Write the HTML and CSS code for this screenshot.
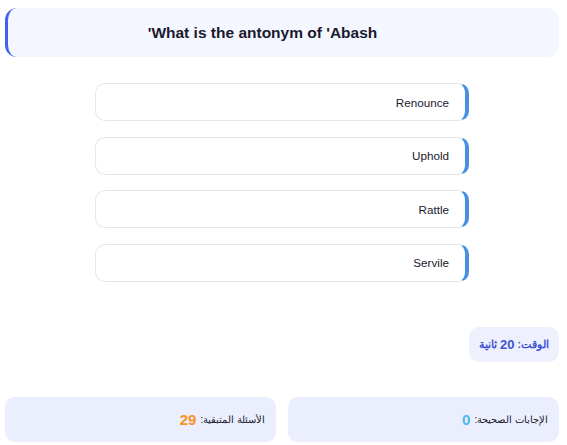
FILE: index.html
```html
<!DOCTYPE html>
<html lang="ar" dir="rtl">
<head>
<meta charset="utf-8">
<link rel="stylesheet" href="styles.css">
</head>
<body>
<div class="page">
  <div class="question"><h2 class="question-text">What is the antonym of 'Abash'</h2></div>
  <div class="options">
    <div class="option">Renounce</div>
    <div class="option">Uphold</div>
    <div class="option">Rattle</div>
    <div class="option">Servile</div>
  </div>
  <div class="timer-row"><div class="timer">الوقت: <span class="tnum">20</span> ثانية</div></div>
  <div class="stats">
    <div class="stat">الإجابات الصحيحة: <span class="num correct">0</span></div>
    <div class="stat">الأسئلة المتبقية: <span class="num remaining">29</span></div>
  </div>
</div>
</body>
</html>
```
FILE: styles.css
```css
html, body { margin: 0; padding: 0; background: #fff; }
body { font-family: "Liberation Sans", Arial, sans-serif; color: #1f1f2e; }
.page { padding: 8px 8px 0 5px; }
.question {
  box-sizing: border-box;
  height: 49px;
  background: #f4f7ff;
  border-left: 3px solid #4361ee;
  border-radius: 12px;
  display: flex;
  align-items: center;
  justify-content: center;
}
.question-text {
  margin: 0;
  font-size: 15.5px;
  font-weight: bold;
  color: #1a1a2e;
  padding-right: 42px;
}
.options {
  width: 374px;
  margin: 26px auto 0;
  display: flex;
  flex-direction: column;
  gap: 15.5px;
}
.option {
  box-sizing: border-box;
  height: 38px;
  border: 1px solid #e5e7eb;
  border-right: 4px solid #4a90e2;
  border-radius: 10px;
  background: #fff;
  display: flex;
  align-items: center;
  padding-right: 16px;
  font-size: 11.7px;
  color: #1a1a2e;
}
.timer-row { display: flex; margin-top: 45px; }
.timer {
  height: 35px;
  box-sizing: border-box;
  padding: 0 10px;
  display: flex;
  align-items: center;
  gap: 3px;
  background: #eef1fd;
  border-radius: 10px;
  color: #3f51d6;
  font-weight: bold;
  font-size: 10.5px;
}
.tnum { font-size: 13px; }
.stats {
  display: flex;
  gap: 12px;
  margin-top: 35px;
}
.stat {
  flex: 1;
  height: 45px;
  box-sizing: border-box;
  background: #ebeefc;
  border-radius: 10px;
  display: flex;
  align-items: center;
  padding: 0 11px;
  font-size: 10px;
  color: #1a1a2e;
}
.num { font-weight: bold; font-size: 15px; margin-right: 4px; }
.correct { color: #4fb8f0; }
.remaining { color: #f7931e; }
```
